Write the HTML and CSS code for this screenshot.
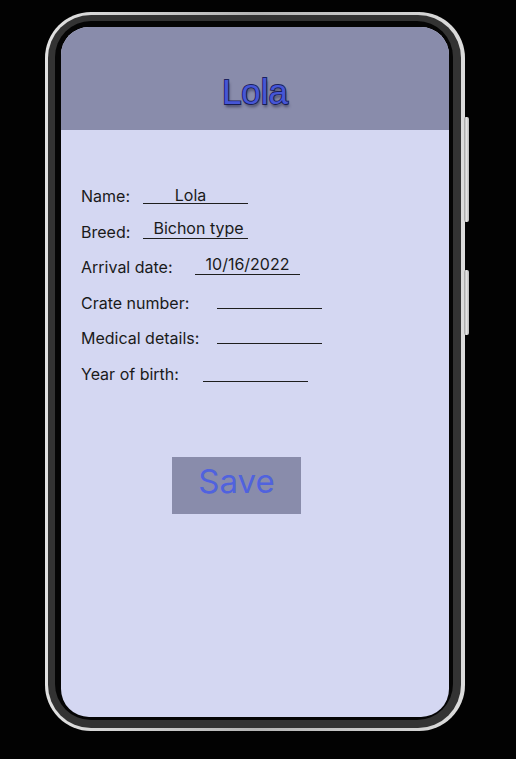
FILE: index.html
```html
<!DOCTYPE html>
<html lang="en">
<head>
<meta charset="utf-8">
<title>Lola</title>
<link rel="stylesheet" href="styles.css">
</head>
<body>
<div class="phone">
  <span class="side-btn side-btn-top"></span>
  <span class="side-btn side-btn-bottom"></span>
  <div class="bezel">
    <div class="inner">
      <div class="screen">
        <header class="header">
          <h1 class="title">Lola</h1>
        </header>
        <main class="content">
          <div class="form">
            <div class="row">
              <span class="label w-short">Name:</span>
              <span class="field field-name">Lola</span>
            </div>
            <div class="row">
              <span class="label w-short">Breed:</span>
              <span class="field field-breed">Bichon type</span>
            </div>
            <div class="row">
              <span class="label w-arrival">Arrival date:</span>
              <span class="field field-arrival">10/16/2022</span>
            </div>
            <div class="row">
              <span class="label w-long">Crate number:</span>
              <span class="field field-crate"></span>
            </div>
            <div class="row">
              <span class="label w-long">Medical details:</span>
              <span class="field field-medical"></span>
            </div>
            <div class="row">
              <span class="label w-year">Year of birth:</span>
              <span class="field field-year"></span>
            </div>
          </div>
          <button class="save" type="button">Save</button>
        </main>
      </div>
    </div>
  </div>
</div>
</body>
</html>
```

FILE: styles.css
```css
html, body {
  margin: 0;
  padding: 0;
  background: #020202;
}

body {
  width: 516px;
  height: 759px;
  overflow: hidden;
}

.phone {
  position: relative;
  box-sizing: border-box;
  width: 420px;
  height: 719px;
  margin: 12px 0 0 45px;
  padding: 3px 4px 3px 3px;
  border-radius: 46px;
  background: linear-gradient(90deg, #e2e2e2 0%, #b4b4b4 50%, #dcdcdc 100%);
}

.side-btn {
  position: absolute;
  right: -4px;
  width: 5px;
  border-radius: 2px;
  background: linear-gradient(90deg, #a0a0a0, #e4e4e4 50%, #b8b8b8);
}

.side-btn-top {
  top: 105px;
  height: 105px;
}

.side-btn-bottom {
  top: 258px;
  height: 65px;
}

.bezel {
  box-sizing: border-box;
  height: 100%;
  padding: 6px 8px 8px 7px;
  border-radius: 43px;
  background: #333333;
}

.inner {
  box-sizing: border-box;
  height: 100%;
  padding: 6px 4px 3px 6px;
  border-radius: 36px;
  background: #050505;
}

.screen {
  height: 100%;
  border-radius: 28px;
  overflow: hidden;
  background: #d4d7f2;
  display: flex;
  flex-direction: column;
}

.header {
  box-sizing: border-box;
  flex: none;
  height: 103px;
  padding-top: 47px;
  background: #898cab;
  text-align: center;
}

.title {
  margin: 0;
  font-family: "Liberation Sans", Arial, sans-serif;
  font-size: 35px;
  font-weight: 400;
  line-height: 35px;
  color: #4656d6;
  -webkit-text-stroke: 1.8px #1a2260;
  paint-order: stroke fill;
  text-shadow: 1px 3px 3px rgba(20, 20, 50, 0.55);
}

.content {
  padding: 56px 0 0 20px;
  font-family: "Inter", "Noto Sans", sans-serif;
  color: #1a1a1a;
}

.form {
  display: flex;
  flex-direction: column;
  gap: 15.6px;
}

.row {
  display: flex;
  align-items: flex-end;
  height: 20px;
  font-size: 16px;
  line-height: 20px;
}

.label {
  flex: none;
}

.w-short { width: 62px; }
.w-arrival { width: 114px; }
.w-long { width: 136px; }
.w-year { width: 122px; }

.field {
  box-sizing: border-box;
  width: 105px;
  flex: none;
  line-height: 16px;
  min-height: 17px;
  text-align: center;
  border-bottom: 1px solid #1e1e1e;
  white-space: nowrap;
}

.field-name {
  margin-bottom: 2px;
  padding-right: 10px;
}

.field-breed {
  margin-bottom: 3px;
  padding: 0 0 2px 6px;
}

.field-arrival {
  margin-bottom: 2px;
  padding-bottom: 2px;
}

.field-crate {
  margin-bottom: 4px;
}

.field-medical {
  margin-bottom: 4px;
}

.field-year {
  margin-bottom: 2px;
}

.save {
  box-sizing: border-box;
  display: flex;
  align-items: center;
  justify-content: center;
  width: 129px;
  height: 57px;
  margin: 73px 0 0 91px;
  padding: 0 0 8px;
  border: none;
  border-radius: 0;
  background: #898cab;
  color: #5062de;
  font-family: "Inter", "Noto Sans", sans-serif;
  font-size: 33px;
  font-weight: 400;
  cursor: pointer;
}
```
